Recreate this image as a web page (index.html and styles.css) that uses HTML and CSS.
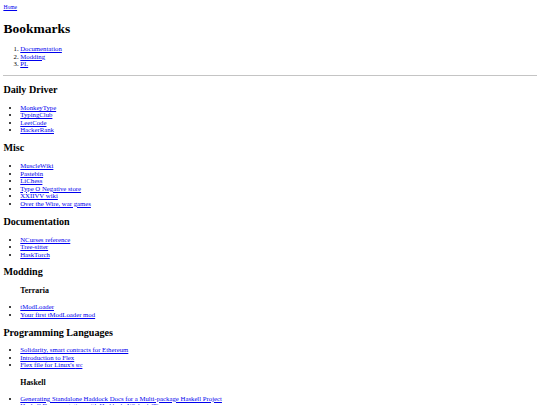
FILE: index.html
```html
<!DOCTYPE html>
<html>
<head>
<meta charset="utf-8">
<title>Bookmarks</title>
<link rel="stylesheet" href="styles.css">
</head>
<body>
<p class="crumbs"><a class="crumb-link" href="#">Home</a></p>
<h1>Bookmarks</h1>
<ol>
<li><a href="#">Documentation</a></li>
<li><a href="#">Modding</a></li>
<li><a href="#">PL</a></li>
</ol>
<hr>
<h2>Daily Driver</h2>
<ul>
<li><a href="#">MonkeyType</a></li>
<li><a href="#">TypingClub</a></li>
<li><a href="#">LeetCode</a></li>
<li><a href="#">HackerRank</a></li>
</ul>
<h2>Misc</h2>
<ul>
<li><a href="#">MuscleWiki</a></li>
<li><a href="#">Pastebin</a></li>
<li><a href="#">LiChess</a></li>
<li><a href="#">Type O Negative store</a></li>
<li><a href="#">XXIIVV wiki</a></li>
<li><a href="#">Over the Wire, war games</a></li>
</ul>
<h2>Documentation</h2>
<ul>
<li><a href="#">NCurses reference</a></li>
<li><a href="#">Tree-sitter</a></li>
<li><a href="#">HaskTorch</a></li>
</ul>
<h2>Modding</h2>
<h3 class="sub">Terraria</h3>
<ul>
<li><a href="#">tModLoader</a></li>
<li><a href="#">Your first tModLoader mod</a></li>
</ul>
<h2>Programming Languages</h2>
<ul>
<li><a href="#">Solidarity, smart contracts for Ethereum</a></li>
<li><a href="#">Introduction to Flex</a></li>
<li><a href="#">Flex file for Linux's <small>src</small></a></li>
</ul>
<h3 class="sub">Haskell</h3>
<ul>
<li><a href="#">Generating Standalone Haddock Docs for a Multi-package Haskell Project</a></li>
<li><a href="#">Haskell Documentation with Haddock: Wishes'n'Tips</a></li>
</ul>
</body>
</html>
```
FILE: styles.css
```css
html {
  background: #fff;
}
body {
  margin: 3.375px;
  font-family: "Liberation Serif", "Times New Roman", serif;
  font-size: 6.75px;
  line-height: 7.5px;
  color: #000;
}
a {
  color: #0000ee;
}
p {
  margin: 1em 0;
}
.crumbs {
  margin-top: 0;
}
.crumb-link {
  font-size: 5.625px;
}
h1 {
  font-size: 2em;
  line-height: 15.5px;
  margin: 0.67em 0;
}
h2 {
  font-size: 1.5em;
  line-height: 11.5px;
  margin: 0.83em 0;
}
h3 {
  font-size: 1.17em;
  line-height: 9px;
  margin: 1em 0;
}
.sub {
  padding-left: 16.875px;
}
ul, ol {
  margin: 1em 0;
  padding-left: 16.875px;
}
hr {
  border: 0;
  border-top: 1px solid #c4c4c4;
  margin: 3.375px 0;
}
```
